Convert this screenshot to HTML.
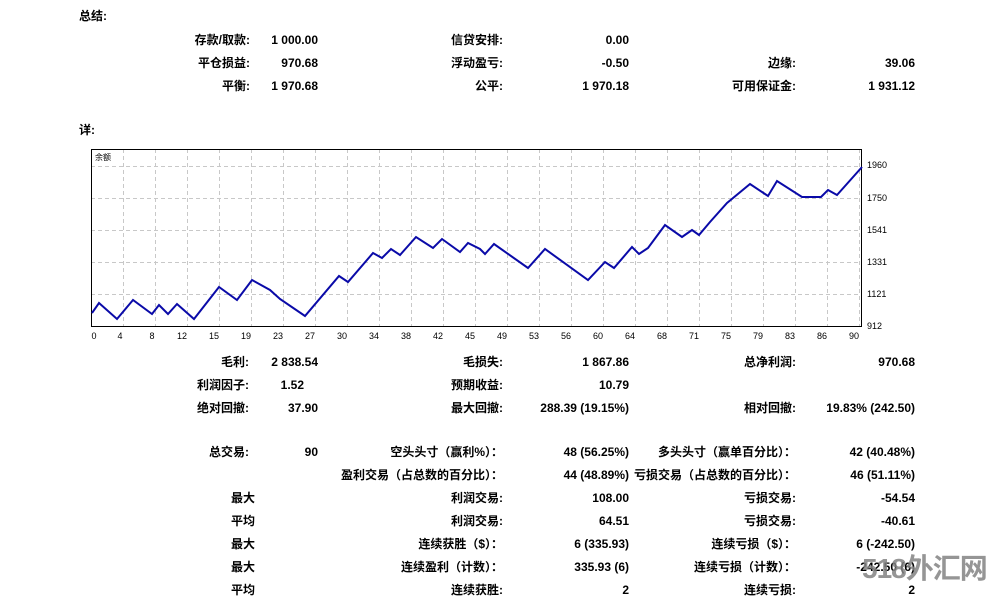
<!DOCTYPE html>
<html><head><meta charset="utf-8"><style>
body{margin:0;width:997px;height:598px;background:#fff;position:relative;overflow:hidden;font-family:"Liberation Sans","Noto Sans CJK SC",sans-serif;font-weight:bold;font-size:12px;color:#000}
.t{position:absolute;left:0;text-align:right;white-space:nowrap;line-height:16px}
.l{position:absolute;white-space:nowrap;line-height:16px}
svg{position:absolute;left:0;top:0}
.wm{position:absolute;left:862px;top:551px;width:130px;font-size:28px;color:rgba(130,130,130,0.85);font-family:"Liberation Sans","Noto Sans CJK SC",sans-serif;font-weight:bold;letter-spacing:-1px;line-height:36px;white-space:nowrap}
</style></head><body>
<div class="l" style="left:79px;top:8px">总结:</div>
<div class="l" style="left:79px;top:122px">详:</div>

<div class="t" style="width:250px;top:32px">存款/取款:</div><div class="t" style="width:318px;top:32px">1 000.00</div>
<div class="t" style="width:503px;top:32px">信贷安排:</div><div class="t" style="width:629px;top:32px">0.00</div>

<div class="t" style="width:250px;top:55px">平仓损益:</div><div class="t" style="width:318px;top:55px">970.68</div>
<div class="t" style="width:503px;top:55px">浮动盈亏:</div><div class="t" style="width:629px;top:55px">-0.50</div>
<div class="t" style="width:796px;top:55px">边缘:</div><div class="t" style="width:915px;top:55px">39.06</div>

<div class="t" style="width:250px;top:78px">平衡:</div><div class="t" style="width:318px;top:78px">1 970.68</div>
<div class="t" style="width:503px;top:78px">公平:</div><div class="t" style="width:629px;top:78px">1 970.18</div>
<div class="t" style="width:796px;top:78px">可用保证金:</div><div class="t" style="width:915px;top:78px">1 931.12</div>

<svg width="997" height="598">
<g stroke="#c8c8c8" stroke-dasharray="4,3" stroke-width="1">
<line x1="123.5" y1="149" x2="123.5" y2="327"/><line x1="155.5" y1="149" x2="155.5" y2="327"/><line x1="187.5" y1="149" x2="187.5" y2="327"/><line x1="219.5" y1="149" x2="219.5" y2="327"/><line x1="251.5" y1="149" x2="251.5" y2="327"/><line x1="283.5" y1="149" x2="283.5" y2="327"/><line x1="315.5" y1="149" x2="315.5" y2="327"/><line x1="347.5" y1="149" x2="347.5" y2="327"/><line x1="379.5" y1="149" x2="379.5" y2="327"/><line x1="411.5" y1="149" x2="411.5" y2="327"/><line x1="443.5" y1="149" x2="443.5" y2="327"/><line x1="475.5" y1="149" x2="475.5" y2="327"/><line x1="507.5" y1="149" x2="507.5" y2="327"/><line x1="539.5" y1="149" x2="539.5" y2="327"/><line x1="571.5" y1="149" x2="571.5" y2="327"/><line x1="603.5" y1="149" x2="603.5" y2="327"/><line x1="635.5" y1="149" x2="635.5" y2="327"/><line x1="667.5" y1="149" x2="667.5" y2="327"/><line x1="699.5" y1="149" x2="699.5" y2="327"/><line x1="731.5" y1="149" x2="731.5" y2="327"/><line x1="763.5" y1="149" x2="763.5" y2="327"/><line x1="795.5" y1="149" x2="795.5" y2="327"/><line x1="827.5" y1="149" x2="827.5" y2="327"/><line x1="859.5" y1="149" x2="859.5" y2="327"/>
<line x1="91" y1="166.5" x2="862" y2="166.5"/><line x1="91" y1="198.5" x2="862" y2="198.5"/><line x1="91" y1="230.5" x2="862" y2="230.5"/><line x1="91" y1="262.5" x2="862" y2="262.5"/><line x1="91" y1="294.5" x2="862" y2="294.5"/>
</g>
<rect x="91.5" y="149.5" width="770" height="177" fill="none" stroke="#000" stroke-width="1"/>
<polyline fill="none" stroke="#0a0aa8" stroke-width="2" points="92,313 99,303 117,319 133,300 152,314 159,305 168,314 177,304 194,319 219,287 237,300 252,280 270,290 280,299 305,316 339,276 348,282 373,253 382,258 391,249 400,255 416,237 433,248 442,239 460,252 468,243 480,249 485,254 494,244 528,268 545,249 588,280 605,262 614,268 632,247 639,254 648,248 665,225 682,237 692,230 699,235 710,222 727,203 750,184 768,196 777,181 802,197 821,197 828,190 837,195 862,167"/>
<g font-family="Liberation Sans,sans-serif" font-size="9" font-weight="normal" fill="#000">
<text x="867" y="168">1960</text><text x="867" y="201">1750</text><text x="867" y="233">1541</text><text x="867" y="265">1331</text><text x="867" y="297">1121</text><text x="867" y="329">912</text>
<g text-anchor="middle">
<text x="94" y="339">0</text><text x="120" y="339">4</text><text x="152" y="339">8</text><text x="182" y="339">12</text><text x="214" y="339">15</text><text x="246" y="339">19</text><text x="278" y="339">23</text><text x="310" y="339">27</text><text x="342" y="339">30</text><text x="374" y="339">34</text><text x="406" y="339">38</text><text x="438" y="339">42</text><text x="470" y="339">45</text><text x="502" y="339">49</text><text x="534" y="339">53</text><text x="566" y="339">56</text><text x="598" y="339">60</text><text x="630" y="339">64</text><text x="662" y="339">68</text><text x="694" y="339">71</text><text x="726" y="339">75</text><text x="758" y="339">79</text><text x="790" y="339">83</text><text x="822" y="339">86</text><text x="854" y="339">90</text>
</g>
<text x="95" y="160" font-size="8" font-family="Noto Sans CJK SC,sans-serif">余额</text>
</g>
</svg>

<div class="t" style="width:249px;top:354px">毛利:</div><div class="t" style="width:318px;top:354px">2 838.54</div>
<div class="t" style="width:503px;top:354px">毛损失:</div><div class="t" style="width:629px;top:354px">1 867.86</div>
<div class="t" style="width:796px;top:354px">总净利润:</div><div class="t" style="width:915px;top:354px">970.68</div>

<div class="t" style="width:249px;top:377px">利润因子:</div><div class="t" style="width:304px;top:377px">1.52</div>
<div class="t" style="width:503px;top:377px">预期收益:</div><div class="t" style="width:629px;top:377px">10.79</div>

<div class="t" style="width:249px;top:400px">绝对回撤:</div><div class="t" style="width:318px;top:400px">37.90</div>
<div class="t" style="width:503px;top:400px">最大回撤:</div><div class="t" style="width:629px;top:400px">288.39 (19.15%)</div>
<div class="t" style="width:796px;top:400px">相对回撤:</div><div class="t" style="width:915px;top:400px">19.83% (242.50)</div>

<div class="t" style="width:249px;top:444px">总交易:</div><div class="t" style="width:318px;top:444px">90</div>
<div class="t" style="width:503px;top:444px">空头头寸（赢利%）：</div><div class="t" style="width:629px;top:444px">48 (56.25%)</div>
<div class="t" style="width:796px;top:444px">多头头寸（赢单百分比）：</div><div class="t" style="width:915px;top:444px">42 (40.48%)</div>

<div class="t" style="width:503px;top:467px">盈利交易（占总数的百分比）：</div><div class="t" style="width:629px;top:467px">44 (48.89%)</div>
<div class="t" style="width:796px;top:467px">亏损交易（占总数的百分比）：</div><div class="t" style="width:915px;top:467px">46 (51.11%)</div>

<div class="t" style="width:255px;top:490px">最大</div>
<div class="t" style="width:503px;top:490px">利润交易:</div><div class="t" style="width:629px;top:490px">108.00</div>
<div class="t" style="width:796px;top:490px">亏损交易:</div><div class="t" style="width:915px;top:490px">-54.54</div>

<div class="t" style="width:255px;top:513px">平均</div>
<div class="t" style="width:503px;top:513px">利润交易:</div><div class="t" style="width:629px;top:513px">64.51</div>
<div class="t" style="width:796px;top:513px">亏损交易:</div><div class="t" style="width:915px;top:513px">-40.61</div>

<div class="t" style="width:255px;top:536px">最大</div>
<div class="t" style="width:503px;top:536px">连续获胜（$）：</div><div class="t" style="width:629px;top:536px">6 (335.93)</div>
<div class="t" style="width:796px;top:536px">连续亏损（$）：</div><div class="t" style="width:915px;top:536px">6 (-242.50)</div>

<div class="t" style="width:255px;top:559px">最大</div>
<div class="t" style="width:503px;top:559px">连续盈利（计数）：</div><div class="t" style="width:629px;top:559px">335.93 (6)</div>
<div class="t" style="width:796px;top:559px">连续亏损（计数）：</div><div class="t" style="width:915px;top:559px">-242.50 (6)</div>

<div class="t" style="width:255px;top:582px">平均</div>
<div class="t" style="width:503px;top:582px">连续获胜:</div><div class="t" style="width:629px;top:582px">2</div>
<div class="t" style="width:796px;top:582px">连续亏损:</div><div class="t" style="width:915px;top:582px">2</div>

<div class="wm">518外汇网</div>
</body></html>
